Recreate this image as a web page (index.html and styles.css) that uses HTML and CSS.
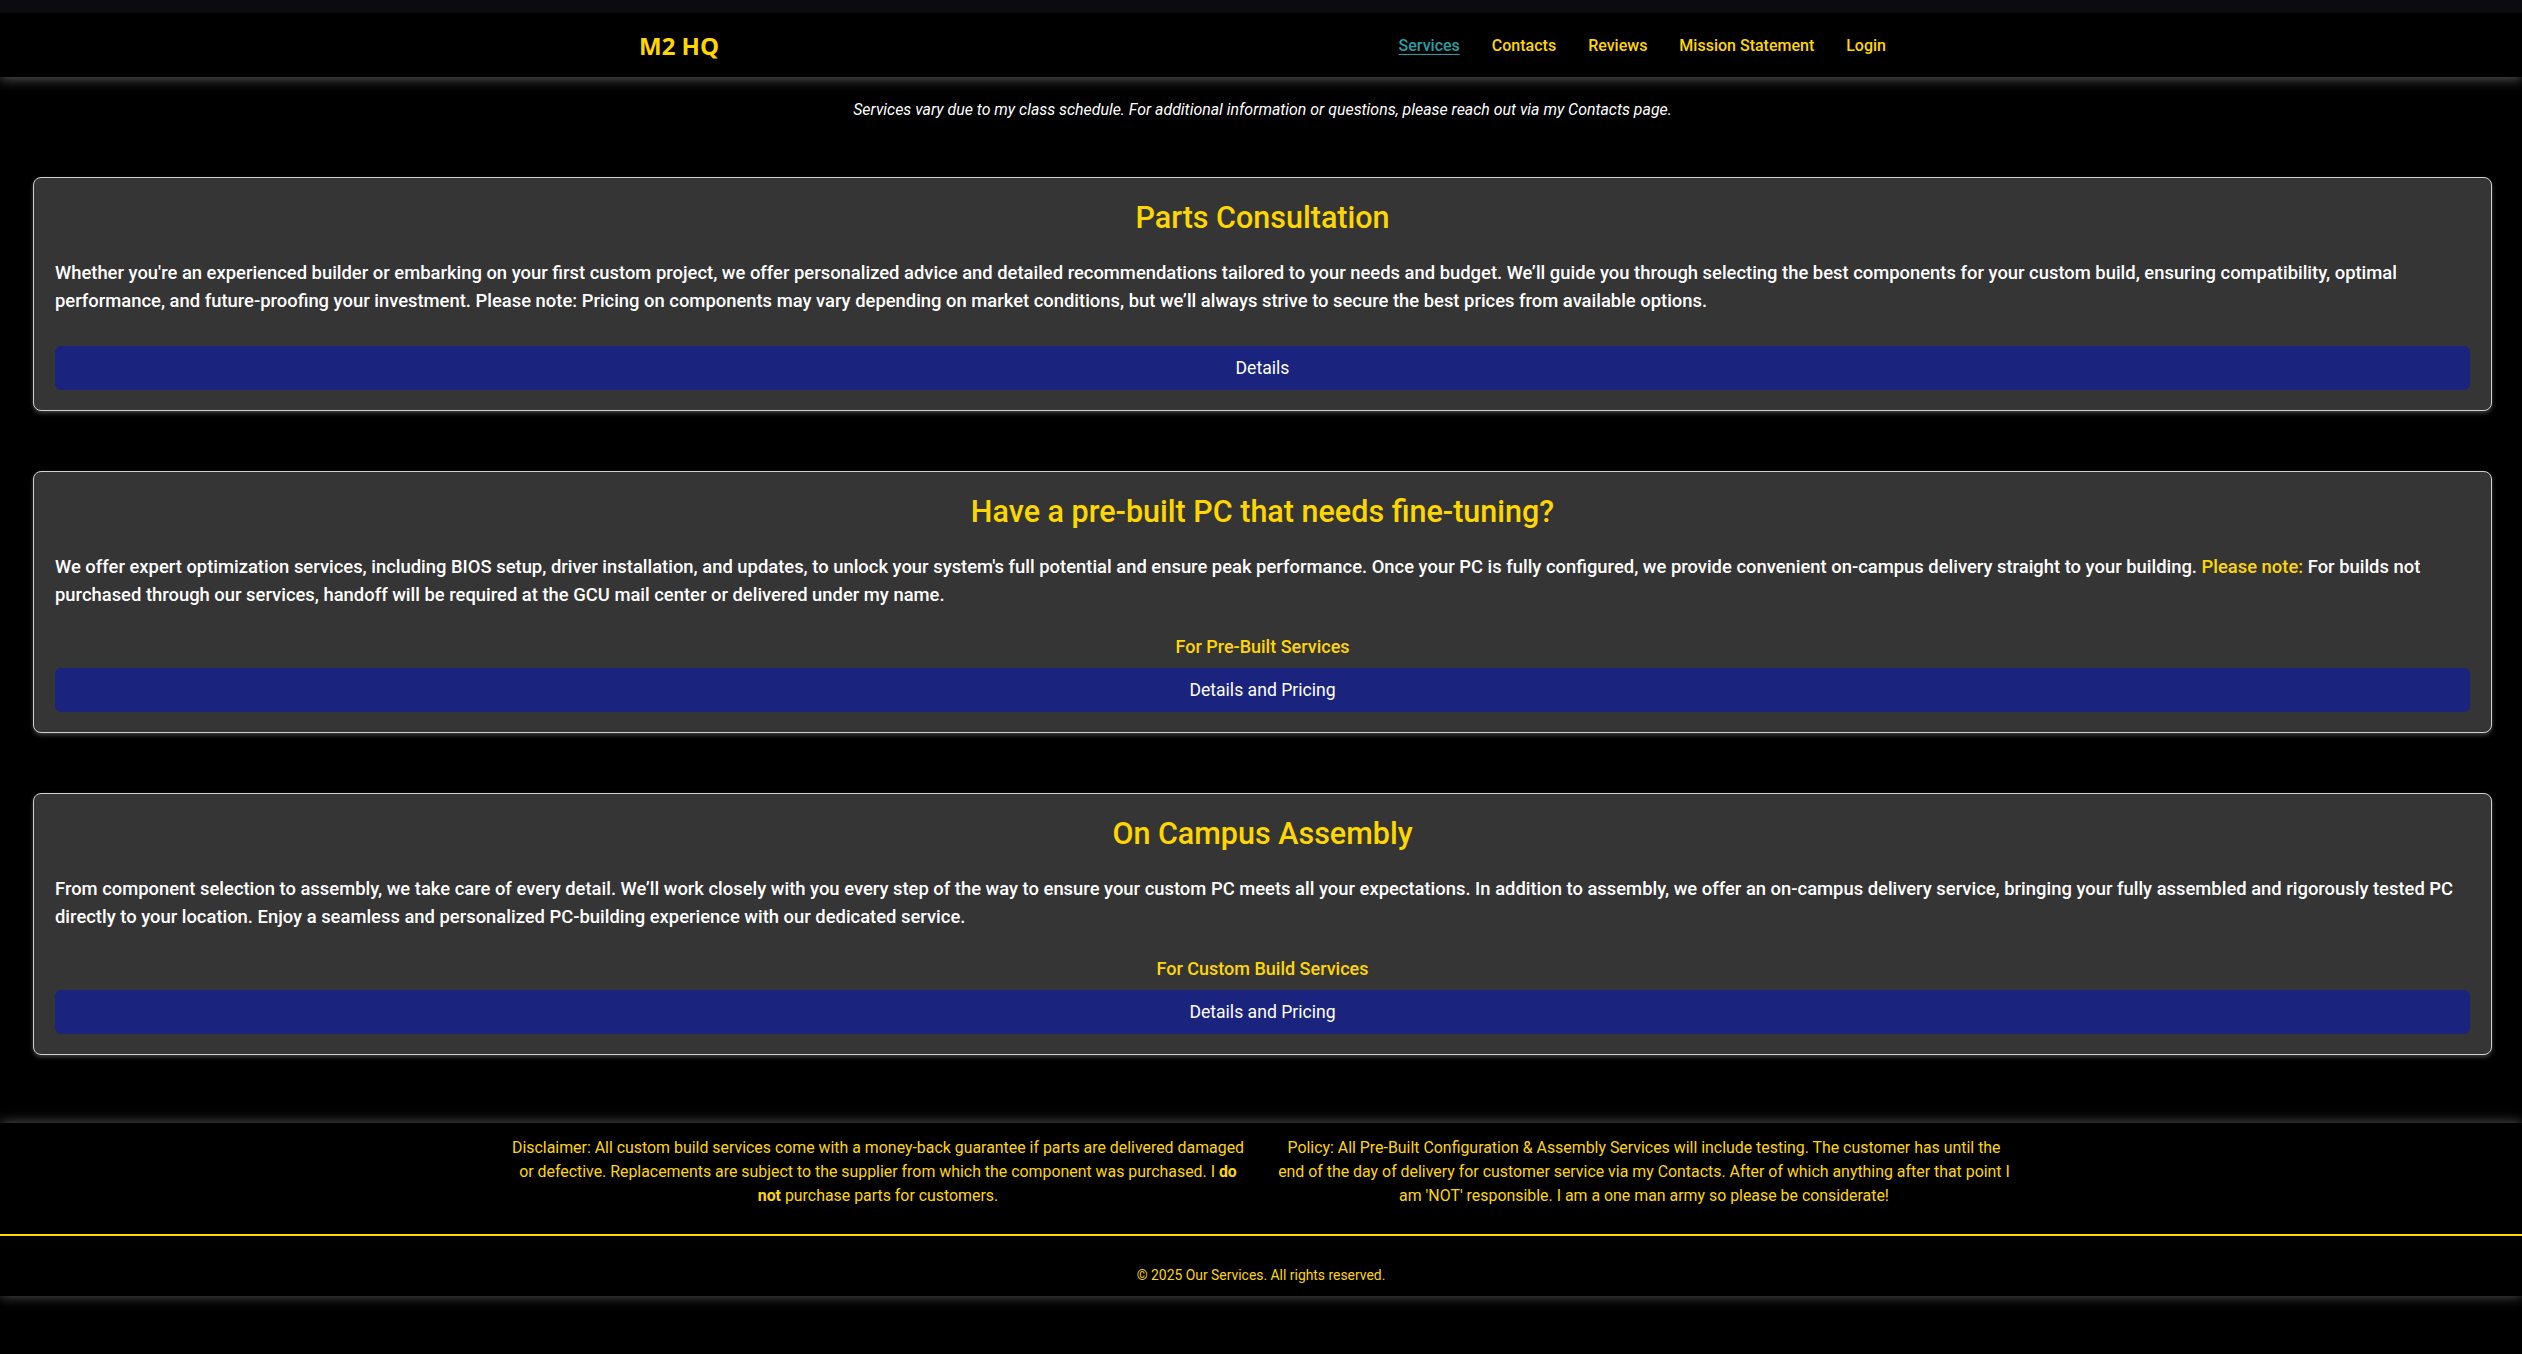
FILE: index.html
```html
<!DOCTYPE html>
<html lang="en">
<head>
<meta charset="utf-8">
<title>Services - M2 HQ</title>
<link rel="stylesheet" href="styles.css">
</head>
<body>
<div class="top-strip"></div>
<header class="site-header">
  <div class="header-inner">
    <div class="logo">M2 HQ</div>
    <nav class="nav">
      <a class="nav-link active" href="#">Services</a>
      <a class="nav-link" href="#">Contacts</a>
      <a class="nav-link" href="#">Reviews</a>
      <a class="nav-link" href="#">Mission Statement</a>
      <a class="nav-link" href="#">Login</a>
    </nav>
  </div>
</header>
<main class="main">
  <p class="notice">Services vary due to my class schedule. For additional information or questions, please reach out via my Contacts page.</p>

  <section class="card">
    <h2 class="card-title">Parts Consultation</h2>
    <p class="card-text">Whether you're an experienced builder or embarking on your first custom project, we offer personalized advice and detailed recommendations tailored to your needs and budget. We’ll guide you through selecting the best components for your custom build, ensuring compatibility, optimal performance, and future-proofing your investment. Please note: Pricing on components may vary depending on market conditions, but we’ll always strive to secure the best prices from available options.</p>
    <a class="btn btn-after-text" href="#">Details</a>
  </section>

  <section class="card">
    <h2 class="card-title">Have a pre-built PC that needs fine-tuning?</h2>
    <p class="card-text">We offer expert optimization services, including BIOS setup, driver installation, and updates, to unlock your system's full potential and ensure peak performance. Once your PC is fully configured, we provide convenient on-campus delivery straight to your building. <span class="hl">Please note:</span> For builds not purchased through our services, handoff will be required at the GCU mail center or delivered under my name.</p>
    <p class="card-label">For Pre-Built Services</p>
    <a class="btn" href="#">Details and Pricing</a>
  </section>

  <section class="card">
    <h2 class="card-title">On Campus Assembly</h2>
    <p class="card-text">From component selection to assembly, we take care of every detail. We’ll work closely with you every step of the way to ensure your custom PC meets all your expectations. In addition to assembly, we offer an on-campus delivery service, bringing your fully assembled and rigorously tested PC directly to your location. Enjoy a seamless and personalized PC-building experience with our dedicated service.</p>
    <p class="card-label">For Custom Build Services</p>
    <a class="btn" href="#">Details and Pricing</a>
  </section>
</main>
<footer class="site-footer">
  <div class="footer-notes">
    <p class="note">Disclaimer: All custom build services come with a money-back guarantee if parts are delivered damaged or defective. Replacements are subject to the supplier from which the component was purchased. I <strong>do not</strong> purchase parts for customers.</p>
    <p class="note">Policy: All Pre-Built Configuration &amp; Assembly Services will include testing. The customer has until the end of the day of delivery for customer service via my Contacts. After of which anything after that point I am 'NOT' responsible. I am a one man army so please be considerate!</p>
  </div>
  <div class="footer-bottom">
    <p class="copyright">© 2025 Our Services. All rights reserved.</p>
  </div>
</footer>
</body>
</html>
```
FILE: styles.css
```css
* { box-sizing: border-box; }

html, body {
  margin: 0;
  padding: 0;
  background: #000;
}

body {
  font-family: Roboto, "Segoe UI", "Open Sans", sans-serif;
  color: #fff;
  min-height: 1354px;
}

.top-strip {
  position: relative;
  z-index: 2;
  height: 13px;
  background: #0b0b10;
}

.site-header {
  position: relative;
  z-index: 1;
  height: 64px;
  background: #000;
  box-shadow: 0 2px 12px rgba(255, 255, 255, 0.35);
}

.header-inner {
  max-width: 1250px;
  height: 100%;
  margin: 0 auto;
  display: flex;
  align-items: center;
  justify-content: space-between;
}

.logo {
  font-family: "Open Sans", Roboto, sans-serif;
  font-weight: 700;
  font-size: 24px;
  color: #ffd700;
  margin-left: 3px;
}

.nav {
  display: flex;
  gap: 32px;
}

.nav-link {
  font-size: 16px;
  font-weight: 500;
  color: #ffd700;
  text-decoration: none;
}

.nav-link.active {
  color: #2a9fa5;
  text-decoration: underline;
  text-underline-offset: 3px;
}

.main {
  padding: 23px 30px 68px 33px;
}

.notice {
  margin: 0 0 57px;
  text-align: center;
  font-style: italic;
  font-size: 15.9px;
  line-height: 20px;
}

.card {
  background: #353535;
  border: 1px solid #d0d0d0;
  border-radius: 8px;
  padding: 22px 21px 20px;
  margin-bottom: 60px;
  box-shadow: 0 2px 4px rgba(255, 255, 255, 0.25);
  display: flex;
  flex-direction: column;
}

.card:last-child { margin-bottom: 0; }

.card-title {
  margin: 0 0 23px;
  text-align: center;
  color: #ffd700;
  font-size: 30.5px;
  line-height: 36px;
  font-weight: 500;
}

.card-text {
  margin: 0;
  font-size: 18.4px;
  line-height: 28px;
  font-weight: 500;
}

.hl { color: #ffd700; }

.card-label {
  margin: 24px 0 7px;
  text-align: center;
  color: #ffd700;
  font-size: 18px;
  line-height: 28px;
  font-weight: 500;
}

.btn {
  display: flex;
  align-items: center;
  justify-content: center;
  height: 44px;
  background: #1a237e;
  border-radius: 6px;
  color: #fff;
  text-decoration: none;
  font-size: 17.6px;
}

.btn-after-text { margin-top: 31px; }

.site-footer {
  background: #000;
  box-shadow: 0 0 12px rgba(255, 255, 255, 0.35);
}

.footer-notes {
  display: flex;
  justify-content: center;
  gap: 26px;
  padding: 13px 0 26px;
}

.note {
  width: 740px;
  margin: 0;
  text-align: center;
  color: #ffd700;
  font-size: 15.9px;
  line-height: 24px;
}

.footer-bottom {
  border-top: 2px solid #ffd700;
  padding: 29px 0 11px;
}

.copyright {
  margin: 0;
  text-align: center;
  color: #ffd700;
  font-size: 13.9px;
  line-height: 20px;
}
```
